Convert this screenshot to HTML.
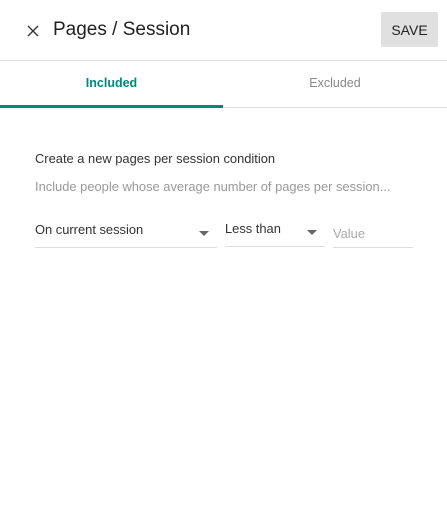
<!DOCTYPE html>
<html><head><style>
body{margin:0;width:447px;height:526px;background:#fff;font-family:"Liberation Sans",Arial,sans-serif;position:relative;overflow:hidden}
.a{position:absolute;white-space:nowrap}
</style></head><body>
<svg class="a" style="left:27px;top:25px" width="12" height="12" viewBox="0 0 12 12"><path d="M1 1L11 11M11 1L1 11" stroke="#333" stroke-width="1.4"/></svg>
<div class="a" style="left:53px;top:19px;font-size:19px;color:#222">Pages / Session</div>
<div class="a" style="left:381px;top:12px;width:57px;height:35px;background:#e0e0e0;border-radius:2px;font-size:14px;color:#222;line-height:36px;text-align:center">SAVE</div>
<div class="a" style="left:0;top:60px;width:447px;height:1px;background:#e0e0e0"></div>
<div class="a" style="left:0;top:76px;width:223px;text-align:center;font-size:12.5px;font-weight:bold;color:#00897b">Included</div>
<div class="a" style="left:223px;top:76px;width:224px;text-align:center;font-size:12.5px;color:#888">Excluded</div>
<div class="a" style="left:0;top:107px;width:447px;height:1px;background:#ddd"></div>
<div class="a" style="left:0;top:105px;width:223px;height:3px;background:#00897b"></div>
<div class="a" style="left:35px;top:151px;font-size:12.9px;color:#333">Create a new pages per session condition</div>
<div class="a" style="left:35px;top:179px;font-size:12.9px;color:#999">Include people whose average number of pages per session...</div>
<div class="a" style="left:35px;top:222px;font-size:12.9px;color:#333">On current session</div>
<svg class="a" style="left:199px;top:231px" width="10" height="5"><path d="M0 0H10L5 5Z" fill="#666"/></svg>
<div class="a" style="left:35px;top:247px;width:182px;height:1px;background:#ddd"></div>
<div class="a" style="left:225px;top:221px;font-size:12.9px;color:#333">Less than</div>
<svg class="a" style="left:307px;top:230px" width="10" height="5"><path d="M0 0H10L5 5Z" fill="#666"/></svg>
<div class="a" style="left:225px;top:246px;width:100px;height:1px;background:#ddd"></div>
<div class="a" style="left:333px;top:226px;font-size:12.9px;color:#aaa">Value</div>
<div class="a" style="left:333px;top:247px;width:80px;height:1px;background:#ddd"></div>
</body></html>
